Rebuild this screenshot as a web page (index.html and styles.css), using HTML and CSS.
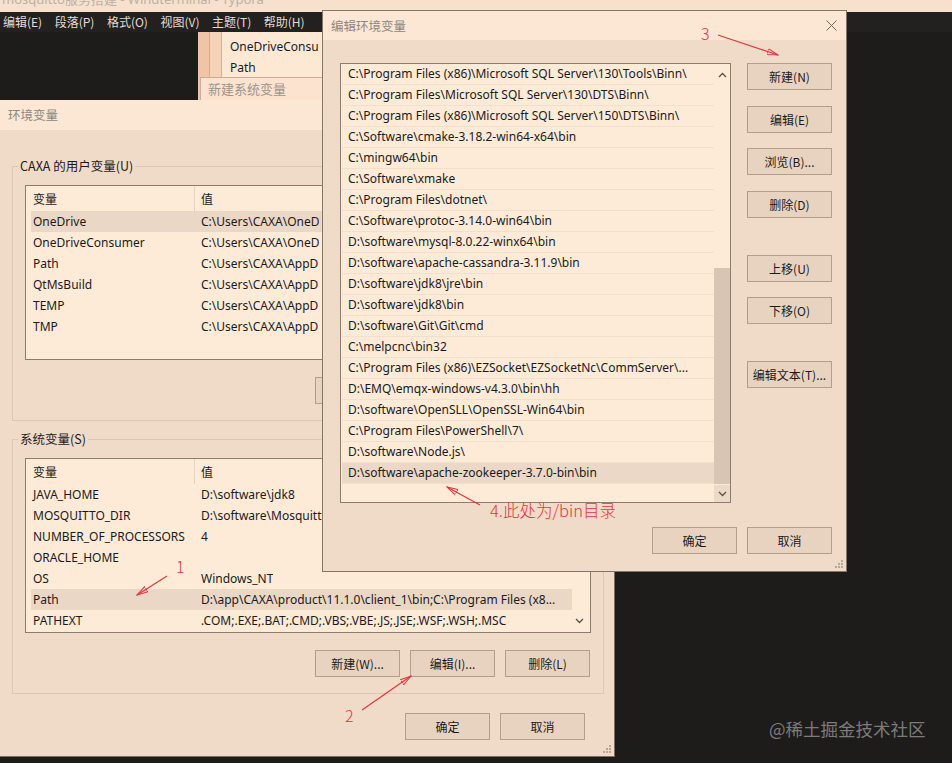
FILE: index.html
```html
<!DOCTYPE html>
<html lang="zh-CN">
<head>
<meta charset="utf-8">
<title>编辑环境变量</title>
<link rel="stylesheet" href="styles.css">
</head>
<body>
<div class="screen">
  <div class="typora">
    <div class="typora-title"><span>mosquitto服务搭建 - Windterminal - Typora</span></div>
    <div class="menubar">
      <span>编辑(E)</span><span>段落(P)</span><span>格式(O)</span><span>视图(V)</span><span>主题(T)</span><span>帮助(H)</span>
    </div>
  </div>

  <div class="win back-list">
    <div class="strip1"></div>
    <div class="strip2"></div>
    <div class="back-items">
      <div class="back-item">OneDriveConsu</div>
      <div class="back-item">Path</div>
    </div>
  </div>
  <div class="win back-title">新建系统变量</div>

  <div class="win env">
    <div class="titlebar">环境变量</div>
    <div class="env-body">
      <div class="group g-user">
        <span class="legend">CAXA 的用户变量(U)</span>
        <div class="listview">
          <div class="lv-head"><span class="h1">变量</span><span class="h2">值</span></div>
          <div class="lv-row sel"><span class="c1">OneDrive</span><span class="c2">C:\Users\CAXA\OneD</span></div>
          <div class="lv-row"><span class="c1">OneDriveConsumer</span><span class="c2">C:\Users\CAXA\OneD</span></div>
          <div class="lv-row"><span class="c1">Path</span><span class="c2">C:\Users\CAXA\AppD</span></div>
          <div class="lv-row"><span class="c1">QtMsBuild</span><span class="c2">C:\Users\CAXA\AppD</span></div>
          <div class="lv-row"><span class="c1">TEMP</span><span class="c2">C:\Users\CAXA\AppD</span></div>
          <div class="lv-row"><span class="c1">TMP</span><span class="c2">C:\Users\CAXA\AppD</span></div>
        </div>
        <div class="btn-row">
          <button class="btn" aria-label="新建"></button><button class="btn" aria-label="编辑"></button><button class="btn" aria-label="删除"></button>
        </div>
      </div>

      <div class="group g-sys">
        <span class="legend">系统变量(S)</span>
        <div class="listview">
          <div class="lv-head"><span class="h1">变量</span><span class="h2">值</span></div>
          <div class="lv-row"><span class="c1">JAVA_HOME</span><span class="c2">D:\software\jdk8</span></div>
          <div class="lv-row"><span class="c1">MOSQUITTO_DIR</span><span class="c2">D:\software\Mosquitto</span></div>
          <div class="lv-row"><span class="c1">NUMBER_OF_PROCESSORS</span><span class="c2">4</span></div>
          <div class="lv-row"><span class="c1">ORACLE_HOME</span><span class="c2"></span></div>
          <div class="lv-row"><span class="c1">OS</span><span class="c2">Windows_NT</span></div>
          <div class="lv-row sel"><span class="c1">Path</span><span class="c2">D:\app\CAXA\product\11.1.0\client_1\bin;C:\Program Files (x8...</span></div>
          <div class="lv-row"><span class="c1">PATHEXT</span><span class="c2">.COM;.EXE;.BAT;.CMD;.VBS;.VBE;.JS;.JSE;.WSF;.WSH;.MSC</span></div>
          <svg class="lv-chev" width="9" height="6" viewBox="0 0 9 6"><path d="M1 1 L4.5 4.5 L8 1" fill="none" stroke="#5a5048" stroke-width="1.3"/></svg>
        </div>
        <div class="btn-row">
          <button class="btn">新建(W)...</button><button class="btn">编辑(I)...</button><button class="btn">删除(L)</button>
        </div>
      </div>

      <div class="dlg-buttons env-buttons">
        <button class="btn">确定</button><button class="btn">取消</button>
      </div>
    </div>
    <svg class="grip" width="8" height="8" viewBox="0 0 8 8"><g fill="#b8a898"><rect x="6" y="0" width="2" height="2"/><rect x="3" y="3" width="2" height="2"/><rect x="6" y="3" width="2" height="2"/><rect x="0" y="6" width="2" height="2"/><rect x="3" y="6" width="2" height="2"/><rect x="6" y="6" width="2" height="2"/></g></svg>
  </div>

  <div class="win edit">
    <div class="titlebar edit-title">
      <span>编辑环境变量</span>
      <svg class="close" width="11" height="11" viewBox="0 0 11 11"><path d="M0.5 0.5 L10.5 10.5 M10.5 0.5 L0.5 10.5" stroke="#6e6660" stroke-width="1"/></svg>
    </div>
    <div class="edit-body">
      <div class="edit-main">
        <div class="pathlist">
          <div class="rows">
            <div class="prow">C:\Program Files (x86)\Microsoft SQL Server\130\Tools\Binn\</div>
            <div class="prow">C:\Program Files\Microsoft SQL Server\130\DTS\Binn\</div>
            <div class="prow">C:\Program Files (x86)\Microsoft SQL Server\150\DTS\Binn\</div>
            <div class="prow">C:\Software\cmake-3.18.2-win64-x64\bin</div>
            <div class="prow">C:\mingw64\bin</div>
            <div class="prow">C:\Software\xmake</div>
            <div class="prow">C:\Program Files\dotnet\</div>
            <div class="prow">C:\Software\protoc-3.14.0-win64\bin</div>
            <div class="prow">D:\software\mysql-8.0.22-winx64\bin</div>
            <div class="prow">D:\software\apache-cassandra-3.11.9\bin</div>
            <div class="prow">D:\software\jdk8\jre\bin</div>
            <div class="prow">D:\software\jdk8\bin</div>
            <div class="prow">D:\software\Git\Git\cmd</div>
            <div class="prow">C:\melpcnc\bin32</div>
            <div class="prow">C:\Program Files (x86)\EZSocket\EZSocketNc\CommServer\...</div>
            <div class="prow">D:\EMQ\emqx-windows-v4.3.0\bin\hh</div>
            <div class="prow">D:\software\OpenSLL\OpenSSL-Win64\bin</div>
            <div class="prow">C:\Program Files\PowerShell\7\</div>
            <div class="prow">D:\software\Node.js\</div>
            <div class="prow sel">D:\software\apache-zookeeper-3.7.0-bin\bin</div>
          </div>
          <div class="vscroll">
            <div class="sb-up"><svg width="9" height="6" viewBox="0 0 9 6"><path d="M1 5 L4.5 1.5 L8 5" fill="none" stroke="#5a5048" stroke-width="1.3"/></svg></div>
            <div class="sb-track"><div class="sb-thumb"></div></div>
            <div class="sb-down"><svg width="9" height="6" viewBox="0 0 9 6"><path d="M1 1 L4.5 4.5 L8 1" fill="none" stroke="#5a5048" stroke-width="1.3"/></svg></div>
          </div>
        </div>
        <div class="side-buttons">
          <button class="btn">新建(N)</button>
          <button class="btn">编辑(E)</button>
          <button class="btn">浏览(B)...</button>
          <button class="btn">删除(D)</button>
          <button class="btn far">上移(U)</button>
          <button class="btn">下移(O)</button>
          <button class="btn far">编辑文本(T)...</button>
        </div>
      </div>
      <div class="dlg-buttons edit-buttons">
        <button class="btn">确定</button><button class="btn">取消</button>
      </div>
    </div>
    <svg class="grip" width="8" height="8" viewBox="0 0 8 8"><g fill="#b8a898"><rect x="6" y="0" width="2" height="2"/><rect x="3" y="3" width="2" height="2"/><rect x="6" y="3" width="2" height="2"/><rect x="0" y="6" width="2" height="2"/><rect x="3" y="6" width="2" height="2"/><rect x="6" y="6" width="2" height="2"/></g></svg>
  </div>

  <svg class="arrows" width="952" height="763" viewBox="0 0 952 763">
    <defs>
      <marker id="ah" viewBox="0 0 12 8" refX="11" refY="4" markerWidth="12" markerHeight="8" orient="auto" markerUnits="userSpaceOnUse">
        <path d="M0 1 L11 4 L0 7 Z" fill="none" stroke="#e0353d" stroke-width="1"/>
      </marker>
    </defs>
    <g stroke="#e0353d" stroke-width="1.2" fill="none">
      <line x1="718" y1="35" x2="778" y2="55" marker-end="url(#ah)"/>
      <line x1="167" y1="576" x2="137" y2="595" marker-end="url(#ah)"/>
      <line x1="362" y1="710" x2="411" y2="676" marker-end="url(#ah)"/>
      <line x1="480" y1="505" x2="447" y2="487" marker-end="url(#ah)"/>
    </g>
  </svg>
  <span class="note n3">3</span>
  <span class="note n1">1</span>
  <span class="note n2">2</span>
  <span class="note n4">4.此处为/bin目录</span>

  <span class="watermark">@稀土掘金技术社区</span>
</div>
</body>
</html>
```

FILE: styles.css
```css
* { box-sizing: border-box; }
html, body { margin: 0; padding: 0; }
body {
  background: #1e1c1a;
  font-family: "Noto Sans", "Noto Sans CJK SC", sans-serif;
  font-size: 12px;
  color: #1b1b1b;
}
.screen {
  position: relative;
  width: 952px;
  height: 763px;
  overflow: hidden;
  background: #1e1c1a;
}

/* Typora window behind */
.typora-title {
  height: 12px;
  background: #f7e0cc;
  overflow: hidden;
  color: #bcb0a5;
  font-size: 13px;
  line-height: 13px;
  padding-left: 2px;
}
.typora-title span { display: block; margin-top: -7px; }
.menubar {
  height: 20px;
  background: #232120;
  display: flex;
  gap: 12.5px;
  padding-left: 3px;
  color: #e2dbd4;
  font-size: 12px;
  line-height: 20px;
  font-family: "Noto Sans CJK SC", sans-serif;
}

.win { position: absolute; }

/* back windows */
.back-list {
  left: 198px;
  top: 32px;
  width: 124px;
  height: 68px;
  display: flex;
  background: #fde8d4;
}
.strip1 { width: 12px; background: #efc5a5; border-right: 1px solid #d9ad8c; }
.strip2 { width: 12px; background: #f6d3b7; border-right: 1px solid #cdb29c; }
.back-items { padding: 4px 0 0 8px; white-space: nowrap; }
.back-item { height: 21px; line-height: 21px; }
.back-title {
  left: 200px;
  top: 77px;
  width: 122px;
  height: 23px;
  background: #fbe3cf;
  border-top: 1px solid #c7ae99;
  border-left: 1px solid #c7ae99;
  color: #9c948d;
  font-family: "Noto Sans CJK SC", sans-serif;
  font-size: 13px;
  line-height: 22px;
  padding-left: 7px;
}

/* generic */
.titlebar {
  height: 30px;
  background: #fce7d4;
  color: #8d8680;
  font-family: "Noto Sans CJK SC", sans-serif;
  font-size: 12.5px;
  line-height: 30px;
  padding-left: 8px;
}
.btn {
  width: 85px;
  height: 27px;
  margin: 0;
  padding: 0;
  background: #e8d3c1;
  border: 1px solid #b09e8f;
  font-family: "Noto Sans CJK SC", sans-serif;
  font-size: 12px;
  color: #1b1b1b;
  text-align: center;
  line-height: 25px;
}
.grip { position: absolute; right: 3px; bottom: 3px; }

/* 环境变量 dialog */
.env {
  left: 0;
  top: 100px;
  width: 615px;
  height: 657px;
  background: #f0dac8;
  border-right: 1px solid #7d6d61;
  border-bottom: 1px solid #7d6d61;
}
.env-body { padding: 36px 10px 0 12px; }
.group {
  position: relative;
  border: 1px solid #dbc7b5;
  padding: 17px 12px 17px 12px;
}
.g-user { padding-top: 18px; padding-bottom: 16px; }
.g-sys { margin-top: 18px; padding-top: 18px; padding-bottom: 16px; }
.legend {
  position: absolute;
  top: -9px;
  left: 5px;
  padding: 0 2px;
  background: #f0dac8;
  font-family: "Noto Sans CJK SC", sans-serif;
  font-size: 12.5px;
  line-height: 16px;
}
.listview {
  position: relative;
  height: 175px;
  background: #fdead7;
  border: 1px solid #8d7d70;
  overflow: hidden;
}
.lv-head {
  display: flex;
  height: 25px;
  line-height: 25px;
  margin-left: 5px;
  font-family: "Noto Sans CJK SC", sans-serif;
}
.h1 { width: 164px; padding-left: 2px; border-right: 1px solid #e6d2c0; }
.h2 { padding-left: 6px; }
.lv-row {
  display: flex;
  height: 21px;
  line-height: 21px;
  margin-left: 5px;
  margin-right: 18px;
  white-space: nowrap;
}
.lv-row.sel { background: #ebd7c5; }
.c1 { width: 168px; padding-left: 2px; flex: none; }
.c2 { padding-left: 2px; overflow: hidden; }
.lv-chev { position: absolute; right: 6px; bottom: 8px; }
.btn-row {
  display: flex;
  justify-content: flex-end;
  gap: 10px;
  margin-top: 17px;
  padding-right: 1px;
}
.g-sys .btn-row { margin-top: 17px; }
.dlg-buttons { display: flex; justify-content: flex-end; gap: 10px; }
.env-buttons { margin-top: 19px; margin-right: 19px; }

/* 编辑环境变量 dialog */
.edit {
  left: 322px;
  top: 10px;
  width: 525px;
  height: 562px;
  background: #f0dbc9;
  border: 1px solid #85766a;
}
.edit-title {
  height: 29px;
  line-height: 29px;
  position: relative;
}
.close { position: absolute; right: 9px; top: 9px; }
.edit-body { padding: 23px 14px 0 17px; }
.edit-main { display: flex; align-items: flex-start; }
.pathlist {
  display: flex;
  width: 391px;
  height: 440px;
  background: #fdead7;
  border: 1px solid #8d7d70;
}
.rows { width: 373px; padding-left: 1px; }
.prow {
  height: 21px;
  line-height: 20px;
  padding-left: 6px;
  border-bottom: 1px solid #f2dfcd;
  white-space: nowrap;
  overflow: hidden;
}
.prow.sel { background: #ebd8c6; }
.vscroll {
  width: 16px;
  display: flex;
  flex-direction: column;
}
.sb-up, .sb-down {
  display: flex;
  align-items: center;
  justify-content: center;
}
.sb-up { height: 21px; }
.sb-track { flex: 1; }
.sb-thumb { margin-top: 183px; height: 216px; background: #d9c5b3; }
.sb-down { height: 17px; background: #ecd9c8; }
.side-buttons {
  display: flex;
  flex-direction: column;
  margin-left: 16px;
  margin-top: 0;
}
.side-buttons .btn { margin-top: 15.5px; }
.side-buttons .btn:first-child { margin-top: 0; }
.side-buttons .btn.far { margin-top: 37px; }
.edit-buttons { margin-top: 24px; }

/* annotations */
.arrows { position: absolute; left: 0; top: 0; pointer-events: none; }
.note {
  position: absolute;
  color: #e0353d;
  font-family: "Noto Sans CJK SC", sans-serif;
  font-weight: 300;
  line-height: 1;
}
.n3 { left: 701px; top: 25px; font-size: 16px; }
.n1 { left: 176px; top: 558px; font-size: 16px; }
.n2 { left: 345px; top: 707px; font-size: 16px; }
.n4 { left: 490px; top: 502px; font-size: 16.5px; }
.watermark {
  position: absolute;
  left: 769px;
  top: 719px;
  color: #7c7b79;
  font-family: "Noto Sans CJK SC", sans-serif;
  font-size: 17.5px;
  line-height: 20px;
}
```
